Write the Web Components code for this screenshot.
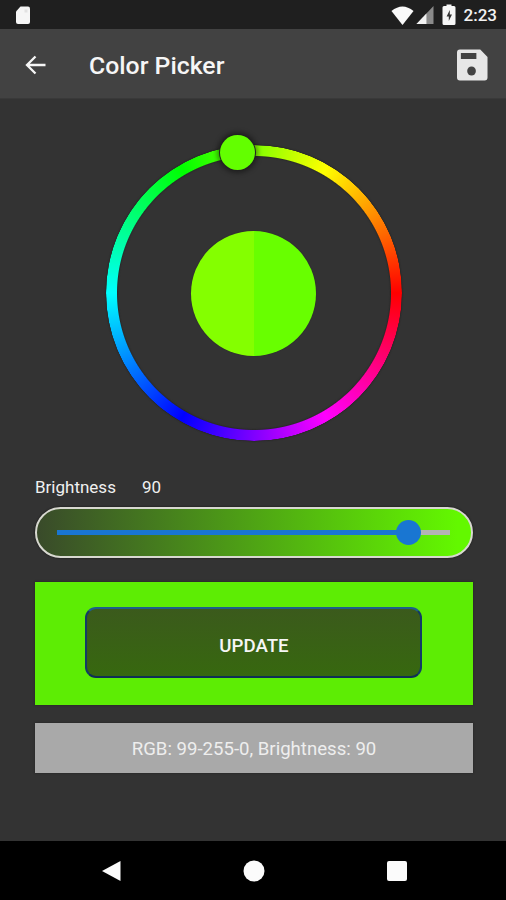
<!DOCTYPE html>
<html>
<head>
<meta charset="utf-8">
<title>Color Picker</title>
<style>
    html, body { margin: 0; padding: 0; background: #333333; }
    body { font-family: Roboto, "Liberation Sans", sans-serif; }
    color-picker-app { height: 900px; }
</style>
</head>
<body>
<color-picker-app>
    <status-bar time="2:23"></status-bar>
    <app-bar>Color Picker</app-bar>
    <main-content>
        <color-wheel></color-wheel>
        <brightness-slider value="90"></brightness-slider>
        <update-panel>UPDATE</update-panel>
        <info-box>RGB: 99-255-0, Brightness: 90</info-box>
    </main-content>
    <nav-bar></nav-bar>
</color-picker-app>

<script>
class ColorPickerApp extends HTMLElement {
    connectedCallback() {
        const shadow = this.attachShadow({ mode: "open" });
        shadow.innerHTML = `
        <style>
            :host { display: flex; flex-direction: column; width: 506px; height: 900px; overflow: hidden; }
        </style>
        <slot></slot>`;
    }
}

class StatusBar extends HTMLElement {
    connectedCallback() {
        const shadow = this.attachShadow({ mode: "open" });
        shadow.innerHTML = `
        <style>
            :host { display: flex; align-items: center; height: 29px; flex: none; background: #1f1f1f; color: #f2f2f2; padding: 0 9px 0 14px; }
            .right { display: flex; align-items: center; margin-left: auto; }
            span { font: 500 17px Roboto, sans-serif; margin-left: 8px; }
            svg { display: block; }
        </style>
        <svg width="18" height="20" viewBox="0 0 18 20">
            <path d="M6.500 1.500H14a2 2 0 0 1 2 2V17a2 2 0 0 1-2 2H4a2 2 0 0 1-2-2V6.500z" fill="#f6f6f6"/>
            <path d="M10.500 4.500h3v3h-3z" fill="#e2e2e2"/>
        </svg>
        <div class="right">
            <svg width="23" height="20" viewBox="0 0 25 20" preserveAspectRatio="none" style="margin-right:2px">
                <path d="M0.500 6Q12.500 -3 24.500 6L12.500 20z" fill="#fafafa"/>
            </svg>
            <svg width="18" height="20" viewBox="0 0 19 20" preserveAspectRatio="none">
                <path d="M0.500 19 18.500 1V19z" fill="#8a8a8a"/>
                <path d="M0.500 19 11 8.500V19z" fill="#f2f2f2"/>
            </svg>
            <svg width="14" height="21" viewBox="0 0 14 21" style="margin-left:8px">
                <path d="M4.500 0.500h5V2H12a1.500 1.500 0 0 1 1.500 1.500v16A1.500 1.500 0 0 1 12 21H2a1.500 1.500 0 0 1-1.500-1.500v-16A1.500 1.500 0 0 1 2 2h2.500z" fill="#f6f6f6"/>
                <path d="M7.800 6 4.600 12.400h2.200V17L10 10.400H7.800z" fill="#333"/>
            </svg>
            <span>${this.getAttribute("time")}</span>
        </div>`;
    }
}

class AppBar extends HTMLElement {
    connectedCallback() {
        const shadow = this.attachShadow({ mode: "open" });
        shadow.innerHTML = `
        <style>
            :host { display: flex; align-items: center; height: 70px; flex: none; box-sizing: border-box; background: #424242; border-bottom: 1px solid #393939; color: #f6f6f6; padding: 2px 18px 0 25px; }
            .title { font: 500 24.800px Roboto, sans-serif; margin: 2px 0 0 43px; }
            svg { display: block; }
            .save { margin-left: auto; }
        </style>
        <svg width="21" height="20" viewBox="0 0 21 20">
            <path d="M20.500 10H2M10.500 1.500 2 10l8.500 8.500" fill="none" stroke="#f6f6f6" stroke-width="2.300"/>
        </svg>
        <div class="title"><slot></slot></div>
        <svg class="save" width="31" height="32" viewBox="0 0 32 32" preserveAspectRatio="none">
            <path d="M3 0.500H24L31.500 8V28.500a3 3 0 0 1-3 3H3a3 3 0 0 1-3-3V3.500a3 3 0 0 1 3-3z" fill="#e6e6e6"/>
            <rect x="4" y="4" width="16" height="6" fill="#424242"/>
            <circle cx="15" cy="22" r="4.500" fill="#424242"/>
        </svg>`;
    }
}

class MainContent extends HTMLElement {
    connectedCallback() {
        const shadow = this.attachShadow({ mode: "open" });
        shadow.innerHTML = `
        <style>
            :host { display: flex; flex-direction: column; flex: 1; min-height: 0; background: #333333; padding: 0 33px 0 35px; }
        </style>
        <slot></slot>`;
    }
}

class ColorWheel extends HTMLElement {
    connectedCallback() {
        const shadow = this.attachShadow({ mode: "open" });
        shadow.innerHTML = `
        <style>
            :host { display: flex; justify-content: center; position: relative; flex: none; margin-top: 46px; height: 296px; }
            .halo { filter: drop-shadow(0 0 1px #1c1c1c); }
            .ring { width: 296px; height: 296px; border-radius: 50%;
                background: conic-gradient(from 90deg, #f00, #f0f 60deg, #00f 120deg, #0ff 180deg, #0f0 240deg, #ff0 300deg, #f00 360deg);
                -webkit-mask: radial-gradient(circle closest-side, transparent 136.500px, #000 137.500px, #000 147.500px, transparent 148.500px);
                mask: radial-gradient(circle closest-side, transparent 136.500px, #000 137.500px, #000 147.500px, transparent 148.500px);
            }
            .center { position: absolute; left: 50%; top: 50%; width: 125px; height: 125px; margin: -62.500px 0 0 -63.500px; border-radius: 50%; box-shadow: 0 0 1px #222;
                background: linear-gradient(90deg, #84ff00 50%, #68ff00 50%); }
            .thumb { position: absolute; left: 184.500px; top: -10px; width: 35px; height: 35px; border-radius: 50%; background: #63ff00; box-shadow: 0 0 0 1px #222, 0 0 5px 3px rgba(0,0,0,.4); }
        </style>
        <div class="halo"><div class="ring"></div></div>
        <div class="center"></div>
        <div class="thumb"></div>`;
    }
}

class BrightnessSlider extends HTMLElement {
    connectedCallback() {
        const value = this.getAttribute("value");
        const shadow = this.attachShadow({ mode: "open" });
        shadow.innerHTML = `
        <style>
            :host { display: block; flex: none; margin-top: 36px; color: #f0f0f0; font: 17px Roboto, sans-serif; }
            .label { display: flex; height: 20px; line-height: 20px; }
            .label span:first-child { width: 107px; }
            .box { box-sizing: border-box; height: 51px; margin-top: 10px; border: 2px solid #d8d8d0; border-radius: 26px; padding: 0 21px 0 20px; display: flex; align-items: center;
                background: linear-gradient(90deg, #394a2a, #63f800 97%); box-shadow: 0 0 2px #111; }
            .track { flex: 1; height: 5px; position: relative; background: linear-gradient(90deg, #1976d2 89.300%, #b4b4b4 89.300%); }
            .knob { position: absolute; left: 339px; top: -10px; width: 25px; height: 25px; border-radius: 50%; background: #1976d2; }
        </style>
        <div class="label"><span>Brightness</span><span>${value}</span></div>
        <div class="box"><div class="track"><div class="knob"></div></div></div>`;
    }
}

class UpdatePanel extends HTMLElement {
    connectedCallback() {
        const shadow = this.attachShadow({ mode: "open" });
        shadow.innerHTML = `
        <style>
            :host { display: flex; flex: none; box-sizing: border-box; height: 123px; margin-top: 24px; padding: 25px 51px 27px 50px; background: #5ded04; box-shadow: 0 0 2px #222; }
            button { flex: 1; box-sizing: border-box; border: 2px solid #123a66; border-top-color: #1d5f8c; border-bottom-color: #0f2f55; border-radius: 11px; background: linear-gradient(#3b5a1c, #37680f); color: #f6f6f6; font: 500 18.700px Roboto, sans-serif; padding: 7px 0 0 1px; margin: 0; }
        </style>
        <button><slot></slot></button>`;
    }
}

class InfoBox extends HTMLElement {
    connectedCallback() {
        const shadow = this.attachShadow({ mode: "open" });
        shadow.innerHTML = `
        <style>
            :host { display: flex; align-items: center; justify-content: center; flex: none; height: 50px; margin-top: 18px; padding-top: 1px; box-sizing: border-box; background: #a9a9a9; color: #eeeeee; font: 18.600px Roboto, sans-serif; box-shadow: 0 0 2px #222; }
        </style>
        <slot></slot>`;
    }
}

class NavBar extends HTMLElement {
    connectedCallback() {
        const shadow = this.attachShadow({ mode: "open" });
        shadow.innerHTML = `
        <style>
            :host { display: grid; grid-template-columns: 222px 143px 1fr; align-items: center; flex: none; height: 59px; background: #000; }
            svg { display: block; justify-self: start; }
        </style>
        <svg width="20" height="22" viewBox="0 0 20 22" style="margin-left:101px"><path d="M19.500 1V21L1 11z" fill="#fbfbfb"/></svg>
        <svg width="22" height="22" viewBox="0 0 22 22" style="margin-left:21px"><circle cx="11" cy="11" r="10.500" fill="#fbfbfb"/></svg>
        <svg width="20" height="20" viewBox="0 0 20 20" style="margin-left:22px"><rect width="20" height="20" rx="2" fill="#fbfbfb"/></svg>`;
    }
}

customElements.define("color-picker-app", ColorPickerApp);
customElements.define("status-bar", StatusBar);
customElements.define("app-bar", AppBar);
customElements.define("main-content", MainContent);
customElements.define("color-wheel", ColorWheel);
customElements.define("brightness-slider", BrightnessSlider);
customElements.define("update-panel", UpdatePanel);
customElements.define("info-box", InfoBox);
customElements.define("nav-bar", NavBar);
</script>
</body>
</html>
